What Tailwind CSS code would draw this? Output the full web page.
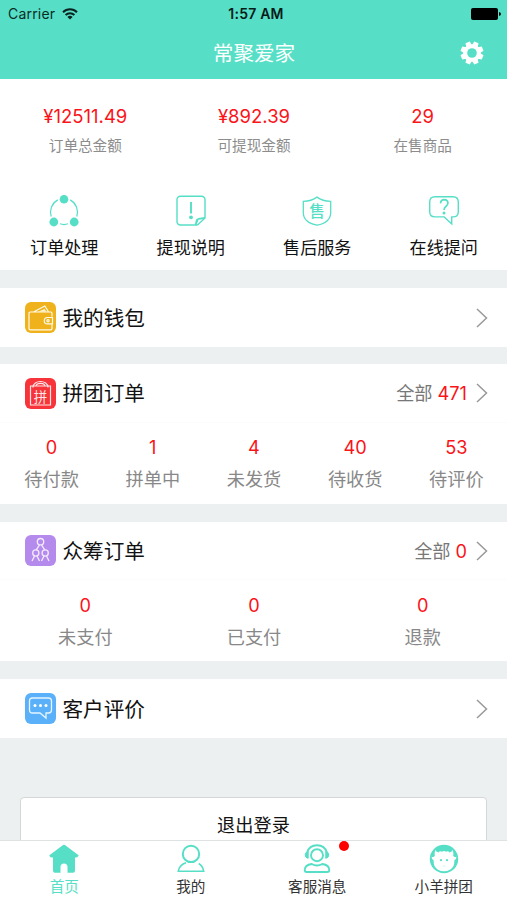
<!DOCTYPE html>
<html lang="zh-CN">
<head>
<meta charset="utf-8">
<meta name="viewport" content="width=device-width, initial-scale=1">
<title>常聚爱家</title>
<script src="https://cdn.jsdelivr.net/npm/@tailwindcss/browser@4"></script>
</head>
<body class="h-[900px] w-[507px] overflow-hidden bg-[#ecf0f1] font-['Inter','Noto_Sans_CJK_SC',sans-serif] text-[#111]">
<div class="flex h-full flex-col">
  <header class="h-[79px] shrink-0 bg-[#56dfc6]">
    <div class="grid h-[27px] grid-cols-3 items-center pl-[8px] pr-[6px] text-[14px] leading-[20px] text-[#0b2b27]">
      <div class="flex items-center gap-[7px]">
        <span class="tracking-[0.2px]">Carrier</span>
        <svg class="h-[12px] w-[16px]" viewBox="0 0 16 12" fill="none" stroke="#0b2320" stroke-width="2"><path d="M1 4.2a10 10 0 0 1 14 0M3.6 7a6.3 6.3 0 0 1 8.800 0"/><path d="M8 11.6 5.400 9a3.800 3.800 0 0 1 5.200 0z" fill="#0b2320" stroke="none"/></svg>
      </div>
      <span class="pl-[3px] text-center text-[14px] font-semibold tracking-[0.2px] text-[#061a17]">1:57 AM</span>
      <svg class="h-[12px] w-[30px] justify-self-end" viewBox="0 0 30 12"><rect width="27" height="12" rx="2" fill="#000"/><path d="M28 4q2 .6 2 2t-2 2z" fill="#000"/></svg>
    </div>
    <div class="grid h-[52px] grid-cols-[1fr_auto_1fr] items-center pr-[23px]">
      <span></span>
      <h1 class="pl-[24px] pt-[2px] text-[20.6px] leading-[28px] text-white">常聚爱家</h1>
      <svg class="h-[24px] w-[24px] justify-self-end" viewBox="-12 -12 24 24"><g fill="#fff"><circle r="8.7"/><g id="teeth"><path id="t" d="M-3-7.500-2.300-11.500H2.300L3-7.500z" transform="rotate(22.5)"/><use href="#t" transform="rotate(45)"/><use href="#t" transform="rotate(90)"/><use href="#t" transform="rotate(135)"/></g><use href="#teeth" transform="rotate(180)"/></g><circle r="4.8" fill="#56dfc6"/></svg>
    </div>
  </header>

  <main class="min-h-0 flex-1 overflow-hidden">
    <section class="h-[191px] bg-white pt-[25px]">
      <div class="grid grid-cols-3 pl-px text-center">
        <div><p class="text-[18.5px] leading-[24px] text-[#fb1318]">¥12511.49</p><p class="mt-[6px] text-[14.6px] leading-[24px] text-[#8c8c8c]">订单总金额</p></div>
        <div><p class="text-[18.5px] leading-[24px] text-[#fb1318]">¥892.39</p><p class="mt-[6px] text-[14.6px] leading-[24px] text-[#8c8c8c]">可提现金额</p></div>
        <div><p class="text-[18.5px] leading-[24px] text-[#fb1318]">29</p><p class="mt-[6px] text-[14.6px] leading-[24px] text-[#8c8c8c]">在售商品</p></div>
      </div>
      <div class="mt-[37px] grid grid-cols-4 pl-px text-[17.1px] leading-[24px]">
        <div class="flex flex-col items-center gap-[8px]">
          <svg class="h-[33px] w-[32px]" viewBox="0 0 32 33" fill="none" stroke="#56dfc6" stroke-width="1.2"><path d="M9.8 4.9A14 14 0 0 0 3.2 21.5M22.2 4.9a14 14 0 0 1 6.6 16.6M12 28.8q4 1.5 8 0"/><g fill="#56dfc6" stroke="none"><circle cx="16" cy="4.2" r="4.3"/><circle cx="5.8" cy="27" r="4.4"/><circle cx="26.2" cy="27" r="4.4"/></g></svg>
          <span>订单处理</span>
        </div>
        <div class="flex flex-col items-center gap-[8px]">
          <svg class="h-[33px] w-[32px]" viewBox="0 0 32 33" fill="none" stroke="#56dfc6" stroke-width="1.4"><path d="M20.700 30H5.300A3.300 3.300 0 0 1 2 26.700V4.500A3.300 3.300 0 0 1 5.300 1.200h21.400A3.300 3.300 0 0 1 30 4.500V23l-7.200 6.700c-.9.6-2.100.3-2.100-.9l.8-3.500c.2-.8.8-1.200 1.700-1.400z"/><path d="m30 23-6.700.9M16 7v11.500" stroke-width="1.900"/><circle cx="16" cy="22.300" r="1.900" fill="#56dfc6" stroke="none"/></svg>
          <span>提现说明</span>
        </div>
        <div class="flex flex-col items-center gap-[8px]">
          <svg class="h-[33px] w-[32px]" viewBox="0 0 32 33"><path d="M16 2.100q5.500 4 13.700 4.300v11q0 10-13.700 12.800Q2.300 27.500 2.300 17.500V6.400Q10.500 6.100 16 2.100z" fill="none" stroke="#56dfc6" stroke-width="1.300"/><text x="16" y="22" text-anchor="middle" font-size="15.500" fill="#56dfc6" font-weight="500">售</text></svg>
          <span>售后服务</span>
        </div>
        <div class="flex flex-col items-center gap-[8px]">
          <svg class="h-[33px] w-[32px]" viewBox="0 0 32 33" fill="none" stroke="#56dfc6" stroke-width="1.400"><path d="M7 1.700h18q5.300 0 5.300 5.300v9.700q0 5.200-5.300 5.200h-1.300v7L16.200 21.900H7q-5.300 0-5.300-5.200V7Q1.700 1.700 7 1.700z"/><path d="M12.500 8.400q.2-3.700 3.800-3.700 3.600.1 3.600 3.400 0 1.800-2 3.400-1.900 1.500-1.900 3.500" stroke-width="1.700"/><circle cx="16" cy="18" r="1.500" fill="#56dfc6" stroke="none"/></svg>
          <span>在线提问</span>
        </div>
      </div>
    </section>

    <section class="mt-[18px] flex h-[59px] items-center bg-white pl-[25px] pr-[18px]">
      <svg class="h-[31px] w-[31px]" viewBox="0 0 31 31" fill="none" stroke="#fffbe8" stroke-width="1.200"><rect width="31" height="31" rx="6" fill="#efb21d" stroke="none"/><path d="M27 14.500v-3.300q0-1.200-1.200-1.200H5.200Q4 10 4 11.200v15.300q0 1.300 1.200 1.300h20.600q1.200 0 1.200-1.300v-4.200M9 9.700 19.800 4l3.500 5.500"/><path d="m13 9.700 6.500-2.700 2 2.700z" fill="#fff3cf" stroke="none"/><path d="M27.500 15.500h-5a3.200 3.200 0 0 0 0 6.400h5z"/><circle cx="23" cy="18.700" r="1.100"/></svg>
      <h2 class="ml-[6.5px] flex-1 pt-[2px] text-[20.6px] leading-[28px]">我的钱包</h2>
      <svg class="h-[20px] w-[14px]" viewBox="0 0 14 20" fill="none" stroke="#999" stroke-width="1.500"><path d="m2 1 9.500 9L2 19"/></svg>
    </section>

    <section class="mt-[17px] h-[140px] bg-white">
      <div class="flex h-[59px] items-center border-b border-[#fbfcfc] pl-[25px] pr-[18px]">
        <svg class="h-[31px] w-[31px]" viewBox="0 0 31 31" fill="none" stroke="#ffe6e6" stroke-width="1.200"><rect width="31" height="31" rx="6" fill="#f73439" stroke="none"/><path d="M5.500 8h20v19h-20zM8 9.500c0-8 15-8 15 0M11 8c.5-3.500 8.500-3.500 9 0"/><text x="15.500" y="23.700" text-anchor="middle" font-size="13.500" fill="#ffe6e6" stroke="none">拼</text></svg>
        <h2 class="ml-[6.5px] flex-1 pt-[2px] text-[20.6px] leading-[28px]">拼团订单</h2>
        <p class="flex items-center gap-[5px] text-[18.2px] leading-[24px]"><span class="text-[#777]">全部</span><span class="text-[#fb1318]">471</span></p>
        <svg class="ml-[8px] h-[20px] w-[14px]" viewBox="0 0 14 20" fill="none" stroke="#999" stroke-width="1.500"><path d="m2 1 9.500 9L2 19"/></svg>
      </div>
      <div class="grid grid-cols-5 pl-px pt-[12px] text-center text-[18.2px] leading-[24px] text-[#888]">
        <div><p class="text-[#fb1318]">0</p><p class="mt-[8px]">待付款</p></div>
        <div><p class="text-[#fb1318]">1</p><p class="mt-[8px]">拼单中</p></div>
        <div><p class="text-[#fb1318]">4</p><p class="mt-[8px]">未发货</p></div>
        <div><p class="text-[#fb1318]">40</p><p class="mt-[8px]">待收货</p></div>
        <div><p class="text-[#fb1318]">53</p><p class="mt-[8px]">待评价</p></div>
      </div>
    </section>

    <section class="mt-[18px] h-[139px] bg-white">
      <div class="flex h-[58px] items-center border-b border-[#fbfcfc] pl-[25px] pr-[18px]">
        <svg class="h-[31px] w-[31px]" viewBox="0 0 31 31" fill="none" stroke="#f4eaff" stroke-width="1.300"><rect width="31" height="31" rx="6" fill="#b48bed" stroke="none"/><circle cx="15.500" cy="6.700" r="3.200"/><circle cx="10.800" cy="18" r="3.100"/><circle cx="20.200" cy="18" r="3.100"/><path d="m14.500 9.800-3.200 5M16.500 9.800l3.200 5M9.500 21l-2.500 5M12 21l2.500 5M19 21l-2.500 5M21.500 21l2.500 5"/></svg>
        <h2 class="ml-[6.5px] flex-1 pt-[2px] text-[20.6px] leading-[28px]">众筹订单</h2>
        <p class="flex items-center gap-[5px] pt-px text-[18.2px] leading-[24px]"><span class="text-[#777]">全部</span><span class="text-[#fb1318]">0</span></p>
        <svg class="ml-[8px] h-[20px] w-[14px]" viewBox="0 0 14 20" fill="none" stroke="#999" stroke-width="1.500"><path d="m2 1 9.500 9L2 19"/></svg>
      </div>
      <div class="grid grid-cols-3 pl-px pt-[13px] text-center text-[18.2px] leading-[24px] text-[#888]">
        <div><p class="text-[#fb1318]">0</p><p class="mt-[8px]">未支付</p></div>
        <div><p class="text-[#fb1318]">0</p><p class="mt-[8px]">已支付</p></div>
        <div><p class="text-[#fb1318]">0</p><p class="mt-[8px]">退款</p></div>
      </div>
    </section>

    <section class="mt-[18px] flex h-[59px] items-center bg-white pl-[25px] pr-[18px]">
      <svg class="h-[31px] w-[31px]" viewBox="0 0 31 31" fill="none" stroke="#e6f5ff" stroke-width="1.300"><rect width="31" height="31" rx="6" fill="#5ab1f9" stroke="none"/><path d="M7.500 5h16q3 0 3 3v9q0 3-3 3H21v5l-6-5H7.500q-3 0-3-3V8q0-3 3-3z"/><g fill="#fff" stroke="none"><circle cx="10" cy="12.500" r="1.500"/><circle cx="15.500" cy="12.500" r="1.500"/><circle cx="21" cy="12.500" r="1.500"/></g></svg>
      <h2 class="ml-[6.5px] flex-1 pt-[2px] text-[20.6px] leading-[28px]">客户评价</h2>
      <svg class="h-[20px] w-[14px]" viewBox="0 0 14 20" fill="none" stroke="#999" stroke-width="1.500"><path d="m2 1 9.500 9L2 19"/></svg>
    </section>

    <button class="mx-[20px] mt-[59px] flex h-[56px] w-[467px] items-center justify-center rounded-[4px] border border-[#d4d7d8] bg-white text-[18.2px] leading-[24px]">退出登录</button>
  </main>

  <nav class="grid h-[60px] shrink-0 grid-cols-4 border-t border-[#dfe2e2] bg-white pl-px pt-[3px] text-[14.6px] leading-[20px] text-[#333]">
    <a class="flex flex-col items-center gap-[3px] text-[#56dfc6]">
      <svg class="h-[30px] w-[30px]" viewBox="0 0 30 30" fill="#56dfc6"><path d="M15 .8q.8 0 1.600.7L29.600 11.300q-.4 2.300-3.600 2.300v13.200q0 2-2 2h-5.500V23a3.500 3.500 0 0 0-7 0v5.800H6q-2 0-2-2V13.600q-3.600 0-3.600-2.300L13.400 1.500Q14.200.8 15 .8z"/></svg>
      <span>首页</span>
    </a>
    <a class="flex flex-col items-center gap-[3px]">
      <svg class="h-[30px] w-[30px]" viewBox="0 0 30 30" fill="none" stroke="#56dfc6"><circle cx="15" cy="9.900" r="8.200" stroke-width="2"/><path d="M10 18.700q-6.500 2-7.700 8.500h25.400q-1-5.500-5-7.700" stroke-width="1.600"/></svg>
      <span>我的</span>
    </a>
    <a class="flex flex-col items-center gap-[3px]">
      <span class="relative block h-[30px]">
        <svg class="h-[30px] w-[30px]" viewBox="0 0 30 30" fill="none" stroke="#56dfc6" stroke-width="1.900"><circle cx="15" cy="11.200" r="6"/><path d="M5 8.700C8-1.200 22-1.200 25 8.700M9.700 20q5.300 3 10.600 0 7 1 7 6 0 2-2 2H4.700q-2 0-2-2 0-5 7-6z"/><path d="M6.200 7.500v6.800q-3-.7-3-3.400t3-3.400zM23.800 7.500v6.800q3-.7 3-3.400t-3-3.400z" fill="#56dfc6" stroke-width="1"/></svg>
        <i class="absolute -top-[3px] left-[36.5px] h-[10px] w-[10px] rounded-full bg-[#fe0000]"></i>
      </span>
      <span>客服消息</span>
    </a>
    <a class="flex flex-col items-center gap-[3px]">
      <svg class="h-[30px] w-[30px]" viewBox="0 0 30 30"><circle cx="15" cy="15" r="14.200" fill="#56dfc6"/><path d="M6.500 6q.8 2 3 2.500Q11 6.500 13 7.800q2-1.400 4 0 2-1.300 3.500.7 2.200-.5 3-2.500 1.500 3 .7 6 1.300 1.500 3.300.8-.3 3-2.200 3.700.7 6-4.300 9.200-6 3-12 0-5-3.200-4.300-9.200-1.900-.7-2.200-3.700 2 .7 3.300-.8-.8-3 .7-6z" fill="#fff"/><g fill="#56dfc6"><circle cx="12" cy="16.200" r="1.100"/><circle cx="18" cy="16.200" r="1.100"/></g><path d="M13.500 22h3" stroke="#d5f7f1"/></svg>
      <span>小羊拼团</span>
    </a>
  </nav>
</div>
</body>
</html>
